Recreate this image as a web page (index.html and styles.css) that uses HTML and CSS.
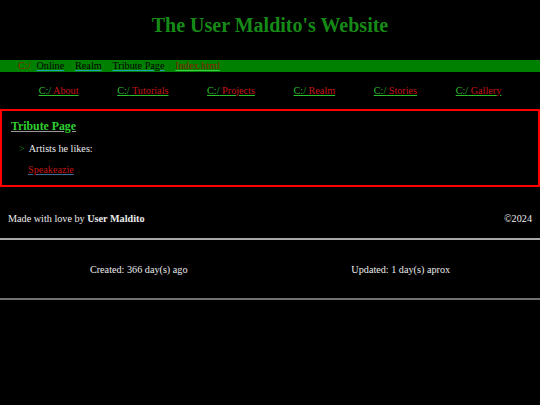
FILE: index.html
```html
<!DOCTYPE html>
<html>
<head>
<meta charset="utf-8">
<link rel="stylesheet" href="styles.css">
</head>
<body>
<header class="site-header">
  <h1 class="site-title">The User Maldito's Website</h1>
</header>
<nav class="crumbs">
  <span class="crumb-root">C:/</span>
  <a class="crumb" href="#">Online</a>
  <span class="crumb-sep">/</span>
  <a class="crumb" href="#">Realm</a>
  <span class="crumb-sep">/</span>
  <a class="crumb" href="#">Tribute Page</a>
  <span class="crumb-sep">/</span>
  <a class="crumb-current" href="#">Index.html</a>
</nav>
<nav class="menu">
  <a class="menu-link" href="#"><span class="drive">C:/</span> About</a>
  <a class="menu-link" href="#"><span class="drive">C:/</span> Tutorials</a>
  <a class="menu-link" href="#"><span class="drive">C:/</span> Projects</a>
  <a class="menu-link" href="#"><span class="drive">C:/</span> Realm</a>
  <a class="menu-link" href="#"><span class="drive">C:/</span> Stories</a>
  <a class="menu-link" href="#"><span class="drive">C:/</span> Gallery</a>
</nav>
<main class="panel">
  <a class="panel-title" href="#">Tribute Page</a>
  <p class="panel-line"><span class="arrow">&gt;</span> Artists he likes:</p>
  <a class="artist" href="#">Speakeazie</a>
</main>
<footer class="footer">
  <div class="footer-top">
    <span>Made with love by <b>User Maldito</b></span>
    <span>&copy;2024</span>
  </div>
  <hr class="rule rule-light">
  <div class="footer-stats">
    <span>Created: 366 day(s) ago</span>
    <span>Updated: 1 day(s) aprox</span>
  </div>
  <hr class="rule rule-dark">
</footer>
</body>
</html>
```
FILE: styles.css
```css
html, body {
  margin: 0;
  padding: 0;
  background: #000;
  color: #ececec;
  font-family: "Liberation Serif", "Times New Roman", serif;
  font-size: 10.2px;
}
.site-header {
  height: 60px;
  display: flex;
  align-items: center;
  justify-content: center;
  padding-bottom: 10px;
  box-sizing: border-box;
}
.site-title {
  margin: 0;
  font-size: 20px;
  font-weight: bold;
  color: #168a16;
}
.crumbs {
  background: #008000;
  height: 12px;
  line-height: 12px;
  padding-left: 18px;
  display: flex;
  gap: 4px;
  white-space: nowrap;
}
.crumb-root { color: #8a1a00; margin-right: 2px; }
.crumb {
  color: #000;
  text-decoration: underline;
  text-decoration-color: #1aa3b0;
}
.crumb-sep { color: #0a6a0a; }
.crumb-current {
  color: #8a1a00;
  text-decoration: underline;
  text-decoration-color: #3ad23a;
}
.menu {
  display: flex;
  justify-content: space-evenly;
  height: 36px;
  align-items: center;
}
.menu-link {
  color: #c41414;
  text-decoration: underline;
  text-decoration-color: #2cbf2c;
}
.drive { color: #2cbf2c; }
.panel {
  display: flex;
  flex-direction: column;
  align-items: flex-start;
  border: 2px solid #ff0000;
  padding: 8px 9px 8px;
  height: 78px;
  box-sizing: border-box;
  margin-top: 1px;
}
.panel-title {
  color: #2ed02e;
  font-weight: bold;
  font-size: 11.8px;
  text-decoration: underline;
  text-decoration-color: #999;
}
.panel-line {
  margin: 9px 0 0 8px;
}
.arrow { color: #1a8a1a; margin-right: 2px; }
.artist {
  margin: 10px 0 0 17px;
  color: #c41414;
  text-decoration: underline;
  text-decoration-color: #3a6a9a;
}
.footer {
  padding: 0 8px;
}
.footer-top {
  display: flex;
  justify-content: space-between;
  align-items: center;
  padding: 25px 0 14px;
  height: 12px;
}
.rule {
  margin: 0 -8px;
  border: 0;
  border-top: 2px solid #aaa;
}
.rule-light { border-top-color: #a8a8a8; }
.rule-dark { border-top-color: #707070; }
.footer-stats {
  display: flex;
  justify-content: space-around;
  height: 58px;
  align-items: center;
}
```
